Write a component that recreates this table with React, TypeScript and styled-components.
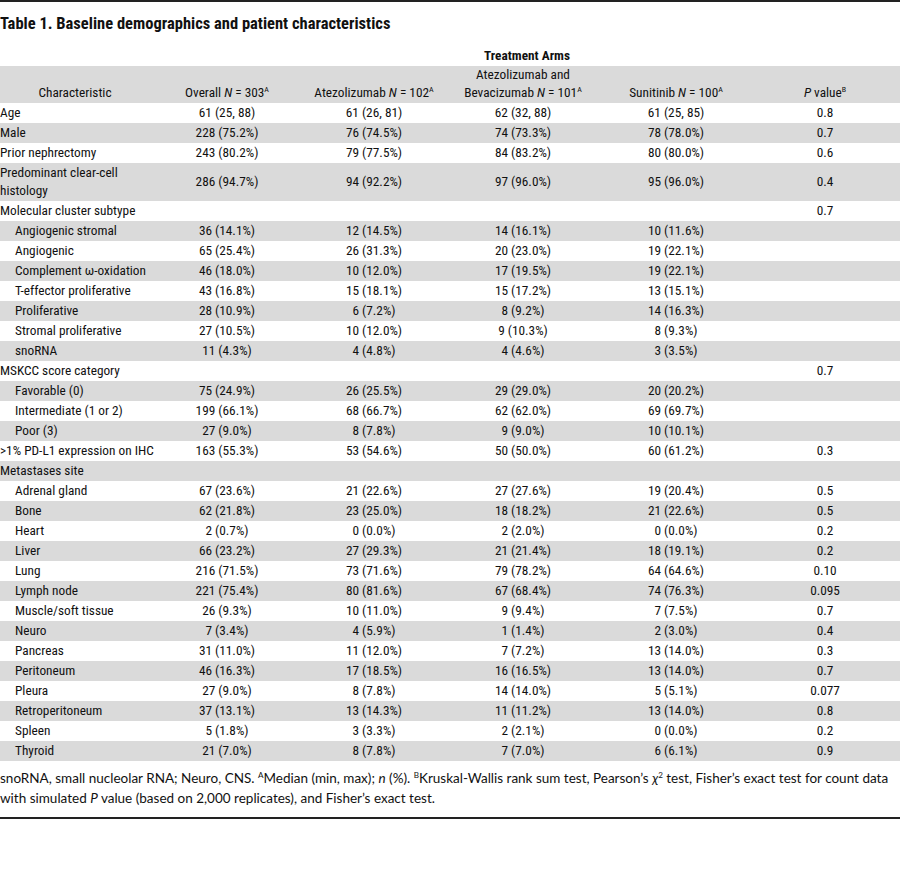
import React from "react";
import styled, { createGlobalStyle } from "styled-components";

const Global = createGlobalStyle`
  html, body { margin: 0; padding: 0; background: #ffffff; }
  body { color: #111111; }
`;

const NARROW = `"Roboto Condensed", "Liberation Sans", sans-serif`;
const FOOT = `Lato, "Liberation Sans", sans-serif`;

const Page = styled.div`
  width: 900px;
  border-top: 2px solid #222;
  border-bottom: 2px solid #222;
  padding-bottom: 9px;
`;

const Title = styled.h1`
  margin: 12px 0 13px;
  font-family: ${NARROW};
  font-weight: 700;
  font-size: 16.5px;
  line-height: 20px;
  color: #111111;
`;

const Table = styled.table`
  width: 900px;
  border-collapse: collapse;
  table-layout: fixed;
  font-family: ${NARROW};
  font-size: 13.3px;
  color: #111111;
`;

const Col = styled.col<{ $w: number }>`
  width: ${(p) => p.$w}px;
`;

const GroupRow = styled.tr``;

const GroupCell = styled.th`
  font-weight: 700;
  text-align: center;
  line-height: 18px;
  padding: 0 0 1px;
`;

const HeadRow = styled.tr`
  background: #dadada;
`;

const HeadCell = styled.th`
  font-weight: 400;
  text-align: center;
  vertical-align: bottom;
  line-height: 18px;
  padding: 0 0 1px;
`;

const Row = styled.tr<{ $shade: boolean }>`
  background: ${(p) => (p.$shade ? "#dadada" : "#ffffff")};
`;

const Label = styled.td<{ $indent: boolean }>`
  text-align: left;
  padding: 1px 0 1px ${(p) => (p.$indent ? 15 : 0)}px;
  line-height: 18px;
  white-space: pre;
  overflow: visible;
`;

const Cell = styled.td`
  text-align: center;
  padding: 1px 0;
  line-height: 18px;
`;

const Sup = styled.sup`
  font-size: 0.6em;
  line-height: 0;
  vertical-align: 0.6em;
`;

const Note = styled.p`
  margin: 7px 0 0;
  font-family: ${FOOT};
  font-size: 13.5px;
  line-height: 20px;
  color: #111111;
`;

type R = { label: string; sub?: boolean; v?: string[]; p?: string };

const rows: R[] = [
  { label: "Age", v: ["61 (25, 88)", "61 (26, 81)", "62 (32, 88)", "61 (25, 85)"], p: "0.8" },
  { label: "Male", v: ["228 (75.2%)", "76 (74.5%)", "74 (73.3%)", "78 (78.0%)"], p: "0.7" },
  { label: "Prior nephrectomy", v: ["243 (80.2%)", "79 (77.5%)", "84 (83.2%)", "80 (80.0%)"], p: "0.6" },
  { label: "Predominant clear-cell\nhistology", v: ["286 (94.7%)", "94 (92.2%)", "97 (96.0%)", "95 (96.0%)"], p: "0.4" },
  { label: "Molecular cluster subtype", p: "0.7" },
  { label: "Angiogenic stromal", sub: true, v: ["36 (14.1%)", "12 (14.5%)", "14 (16.1%)", "10 (11.6%)"] },
  { label: "Angiogenic", sub: true, v: ["65 (25.4%)", "26 (31.3%)", "20 (23.0%)", "19 (22.1%)"] },
  { label: "Complement ω-oxidation", sub: true, v: ["46 (18.0%)", "10 (12.0%)", "17 (19.5%)", "19 (22.1%)"] },
  { label: "T-effector proliferative", sub: true, v: ["43 (16.8%)", "15 (18.1%)", "15 (17.2%)", "13 (15.1%)"] },
  { label: "Proliferative", sub: true, v: ["28 (10.9%)", "6 (7.2%)", "8 (9.2%)", "14 (16.3%)"] },
  { label: "Stromal proliferative", sub: true, v: ["27 (10.5%)", "10 (12.0%)", "9 (10.3%)", "8 (9.3%)"] },
  { label: "snoRNA", sub: true, v: ["11 (4.3%)", "4 (4.8%)", "4 (4.6%)", "3 (3.5%)"] },
  { label: "MSKCC score category", p: "0.7" },
  { label: "Favorable (0)", sub: true, v: ["75 (24.9%)", "26 (25.5%)", "29 (29.0%)", "20 (20.2%)"] },
  { label: "Intermediate (1 or 2)", sub: true, v: ["199 (66.1%)", "68 (66.7%)", "62 (62.0%)", "69 (69.7%)"] },
  { label: "Poor (3)", sub: true, v: ["27 (9.0%)", "8 (7.8%)", "9 (9.0%)", "10 (10.1%)"] },
  { label: ">1% PD-L1 expression on IHC", v: ["163 (55.3%)", "53 (54.6%)", "50 (50.0%)", "60 (61.2%)"], p: "0.3" },
  { label: "Metastases site" },
  { label: "Adrenal gland", sub: true, v: ["67 (23.6%)", "21 (22.6%)", "27 (27.6%)", "19 (20.4%)"], p: "0.5" },
  { label: "Bone", sub: true, v: ["62 (21.8%)", "23 (25.0%)", "18 (18.2%)", "21 (22.6%)"], p: "0.5" },
  { label: "Heart", sub: true, v: ["2 (0.7%)", "0 (0.0%)", "2 (2.0%)", "0 (0.0%)"], p: "0.2" },
  { label: "Liver", sub: true, v: ["66 (23.2%)", "27 (29.3%)", "21 (21.4%)", "18 (19.1%)"], p: "0.2" },
  { label: "Lung", sub: true, v: ["216 (71.5%)", "73 (71.6%)", "79 (78.2%)", "64 (64.6%)"], p: "0.10" },
  { label: "Lymph node", sub: true, v: ["221 (75.4%)", "80 (81.6%)", "67 (68.4%)", "74 (76.3%)"], p: "0.095" },
  { label: "Muscle/soft tissue", sub: true, v: ["26 (9.3%)", "10 (11.0%)", "9 (9.4%)", "7 (7.5%)"], p: "0.7" },
  { label: "Neuro", sub: true, v: ["7 (3.4%)", "4 (5.9%)", "1 (1.4%)", "2 (3.0%)"], p: "0.4" },
  { label: "Pancreas", sub: true, v: ["31 (11.0%)", "11 (12.0%)", "7 (7.2%)", "13 (14.0%)"], p: "0.3" },
  { label: "Peritoneum", sub: true, v: ["46 (16.3%)", "17 (18.5%)", "16 (16.5%)", "13 (14.0%)"], p: "0.7" },
  { label: "Pleura", sub: true, v: ["27 (9.0%)", "8 (7.8%)", "14 (14.0%)", "5 (5.1%)"], p: "0.077" },
  { label: "Retroperitoneum", sub: true, v: ["37 (13.1%)", "13 (14.3%)", "11 (11.2%)", "13 (14.0%)"], p: "0.8" },
  { label: "Spleen", sub: true, v: ["5 (1.8%)", "3 (3.3%)", "2 (2.1%)", "0 (0.0%)"], p: "0.2" },
  { label: "Thyroid", sub: true, v: ["21 (7.0%)", "8 (7.8%)", "7 (7.0%)", "6 (6.1%)"], p: "0.9" },
];

const widths = [150, 154, 140, 158, 148, 150];

export default function App() {
  return (
    <Page>
      <Global />
      <Title>Table 1. Baseline demographics and patient characteristics</Title>
      <Table>
        <colgroup>
          {widths.map((w, i) => (
            <Col key={i} $w={w} />
          ))}
        </colgroup>
        <thead>
          <GroupRow>
            <GroupCell />
            <GroupCell />
            <GroupCell colSpan={3}>Treatment Arms</GroupCell>
            <GroupCell />
          </GroupRow>
          <HeadRow>
            <HeadCell>Characteristic</HeadCell>
            <HeadCell>
              Overall <i>N</i> = 303<Sup>A</Sup>
            </HeadCell>
            <HeadCell>
              Atezolizumab <i>N</i> = 102<Sup>A</Sup>
            </HeadCell>
            <HeadCell>
              Atezolizumab and
              <br />
              Bevacizumab <i>N</i> = 101<Sup>A</Sup>
            </HeadCell>
            <HeadCell>
              Sunitinib <i>N</i> = 100<Sup>A</Sup>
            </HeadCell>
            <HeadCell>
              <i>P</i> value<Sup>B</Sup>
            </HeadCell>
          </HeadRow>
        </thead>
        <tbody>
          {rows.map((r, i) => (
            <Row key={i} $shade={i % 2 === 1}>
              <Label $indent={!!r.sub}>{r.label}</Label>
              {[0, 1, 2, 3].map((k) => (
                <Cell key={k}>{r.v ? r.v[k] : ""}</Cell>
              ))}
              <Cell>{r.p ?? ""}</Cell>
            </Row>
          ))}
        </tbody>
      </Table>
      <Note>
        snoRNA, small nucleolar RNA; Neuro, CNS. <Sup>A</Sup>Median (min, max); <i>n</i> (%).{" "}
        <Sup>B</Sup>Kruskal-Wallis rank sum test, Pearson’s <i>χ</i>
        <Sup>2</Sup> test, Fisher’s exact test for count data with simulated <i>P</i> value (based on
        2,000 replicates), and Fisher’s exact test.
      </Note>
    </Page>
  );
}
